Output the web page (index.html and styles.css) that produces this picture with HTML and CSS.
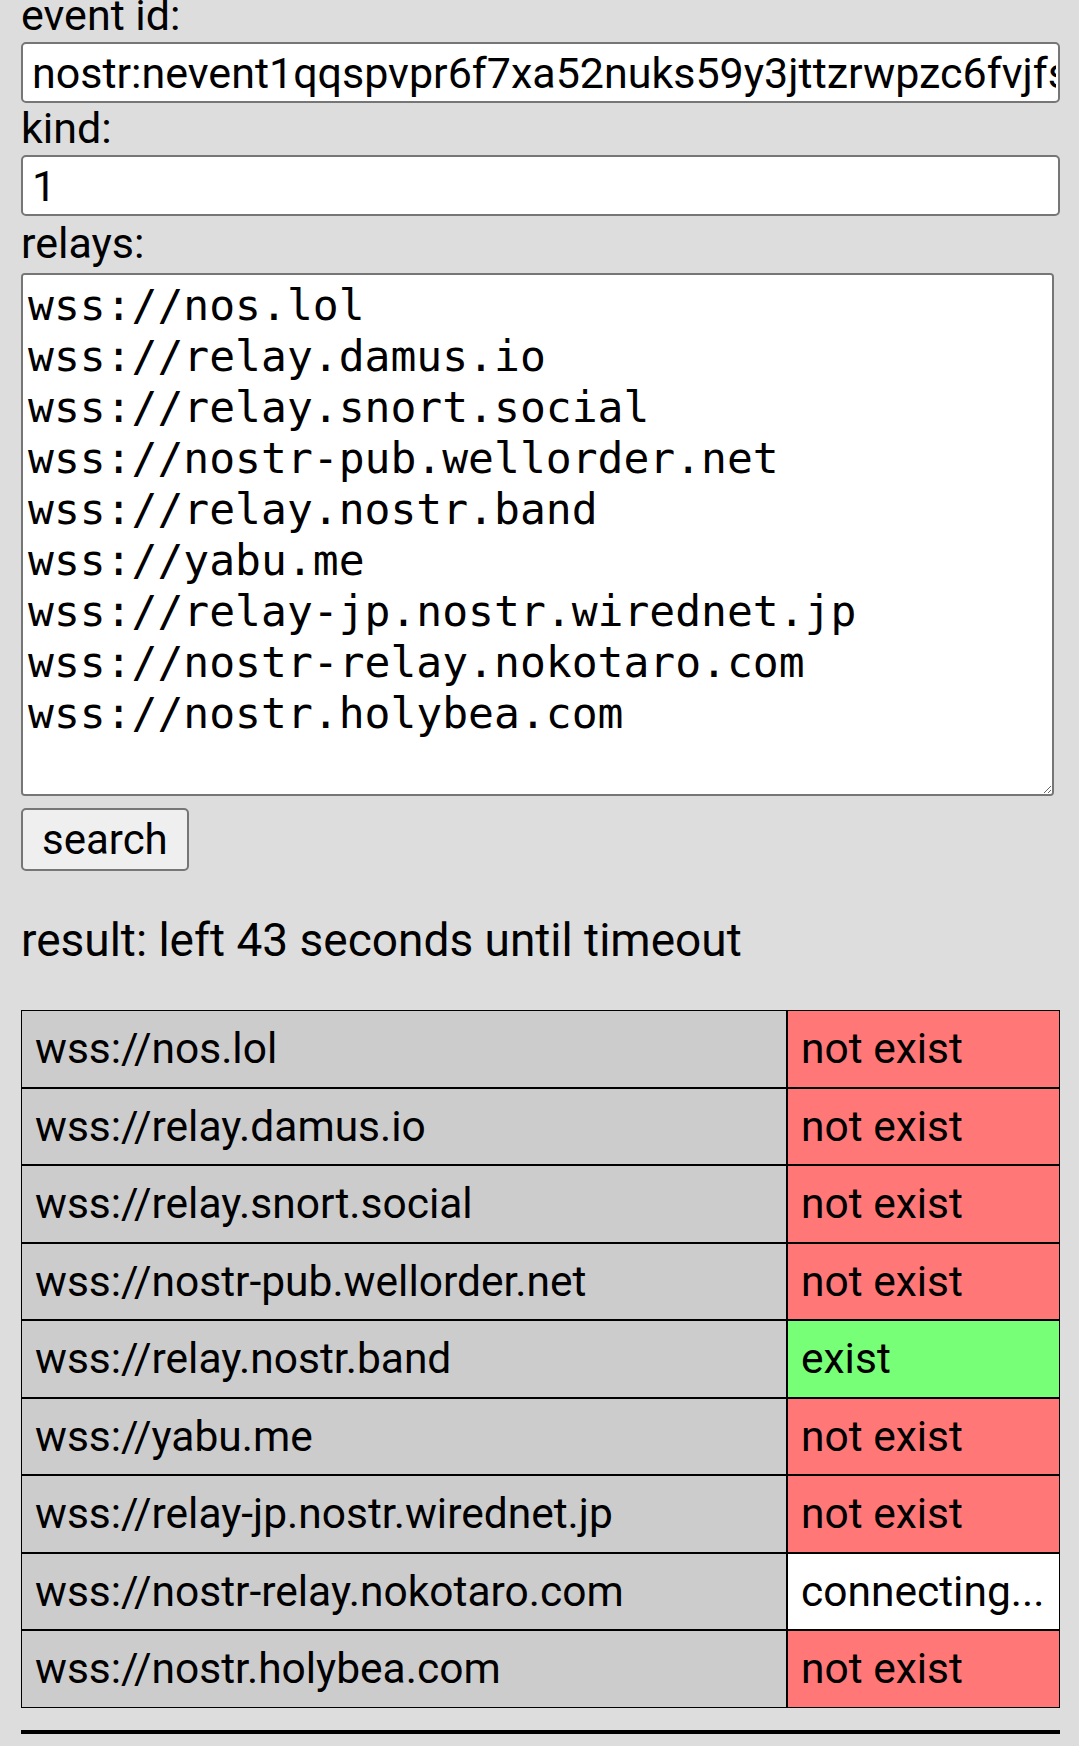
FILE: index.html
```html
<!DOCTYPE html>
<html lang="en">
<head>
<meta charset="utf-8">
<title>nostr event search</title>
<link rel="stylesheet" href="styles.css">
</head>
<body>
<div class="page">
  <label class="label" for="eid">event id:</label>
  <input id="eid" class="field" type="text" value="nostr:nevent1qqspvpr6f7xa52nuks59y3jttzrwpzc6fvjfs">
  <label class="label" for="kind">kind:</label>
  <input id="kind" class="field" type="text" value="1">
  <label class="label label-relays" for="relays">relays:</label>
  <textarea id="relays" class="relays" spellcheck="false">wss://nos.lol
wss://relay.damus.io
wss://relay.snort.social
wss://nostr-pub.wellorder.net
wss://relay.nostr.band
wss://yabu.me
wss://relay-jp.nostr.wirednet.jp
wss://nostr-relay.nokotaro.com
wss://nostr.holybea.com
</textarea>
  <button class="btn" type="button">search</button>
  <p class="result">result: left 43 seconds until timeout</p>
  <table class="results">
    <tr><td class="relay">wss://nos.lol</td><td class="status no">not exist</td></tr>
    <tr><td class="relay">wss://relay.damus.io</td><td class="status no">not exist</td></tr>
    <tr><td class="relay">wss://relay.snort.social</td><td class="status no">not exist</td></tr>
    <tr><td class="relay">wss://nostr-pub.wellorder.net</td><td class="status no">not exist</td></tr>
    <tr><td class="relay">wss://relay.nostr.band</td><td class="status yes">exist</td></tr>
    <tr><td class="relay">wss://yabu.me</td><td class="status no">not exist</td></tr>
    <tr><td class="relay">wss://relay-jp.nostr.wirednet.jp</td><td class="status no">not exist</td></tr>
    <tr><td class="relay">wss://nostr-relay.nokotaro.com</td><td class="status wait">connecting...</td></tr>
    <tr><td class="relay">wss://nostr.holybea.com</td><td class="status no">not exist</td></tr>
  </table>
  <hr class="rule">
</div>
</body>
</html>
```

FILE: styles.css
```css
html, body {
  margin: 0;
  padding: 0;
  background: #dddddd;
}

body {
  overflow: hidden;
  font-family: Roboto, "Noto Sans", Arial, sans-serif;
  color: #000;
}

.page {
  display: flex;
  flex-direction: column;
  align-items: flex-start;
  margin: -10px 19px 0 21px;
  font-size: 43px;
}

.label {
  display: block;
  height: 50px;
  line-height: 50px;
}

.field {
  box-sizing: border-box;
  width: 1039px;
  height: 61px;
  margin: 2px 0 0;
  padding: 0 2px 0 9px;
  border: 2px solid #767676;
  border-radius: 5px;
  background: #fff;
  font-family: Roboto, "Noto Sans", Arial, sans-serif;
  font-size: 43px;
  color: #000;
  outline: none;
}

.label-relays {
  margin-top: 2px;
}

.relays {
  box-sizing: border-box;
  width: 1033px;
  height: 523px;
  margin: 5px 0 0;
  padding: 5px 5px;
  border: 2px solid #767676;
  border-radius: 4px;
  background: #fff;
  font-family: "DejaVu Sans Mono", "Liberation Mono", monospace;
  font-size: 43px;
  line-height: 51px;
  color: #000;
  outline: none;
  resize: both;
}

.btn {
  box-sizing: border-box;
  height: 63px;
  margin: 12px 0 0;
  padding: 0 19px;
  border: 2px solid #767676;
  border-radius: 5px;
  background: #efefef;
  font-family: Roboto, "Noto Sans", Arial, sans-serif;
  font-size: 42px;
  color: #000;
}

.result {
  margin: 42px 0 0;
  font-size: 46px;
  line-height: 55px;
}

.results {
  width: 1039px;
  margin-top: 42px;
  border-collapse: separate;
  border-spacing: 0;
  font-size: 42.5px;
}

.results td {
  padding: 13px 13px;
  border: 1px solid #000;
  line-height: 49.5px;
  white-space: nowrap;
}

.relay {
  background: #cccccc;
}

.status {
  width: 245px;
}

.no {
  background: #ff7777;
}

.yes {
  background: #77ff77;
}

.wait {
  background: #ffffff;
}

.rule {
  align-self: stretch;
  height: 4px;
  margin: 22px 0 0;
  border: none;
  background: #000;
}
```
